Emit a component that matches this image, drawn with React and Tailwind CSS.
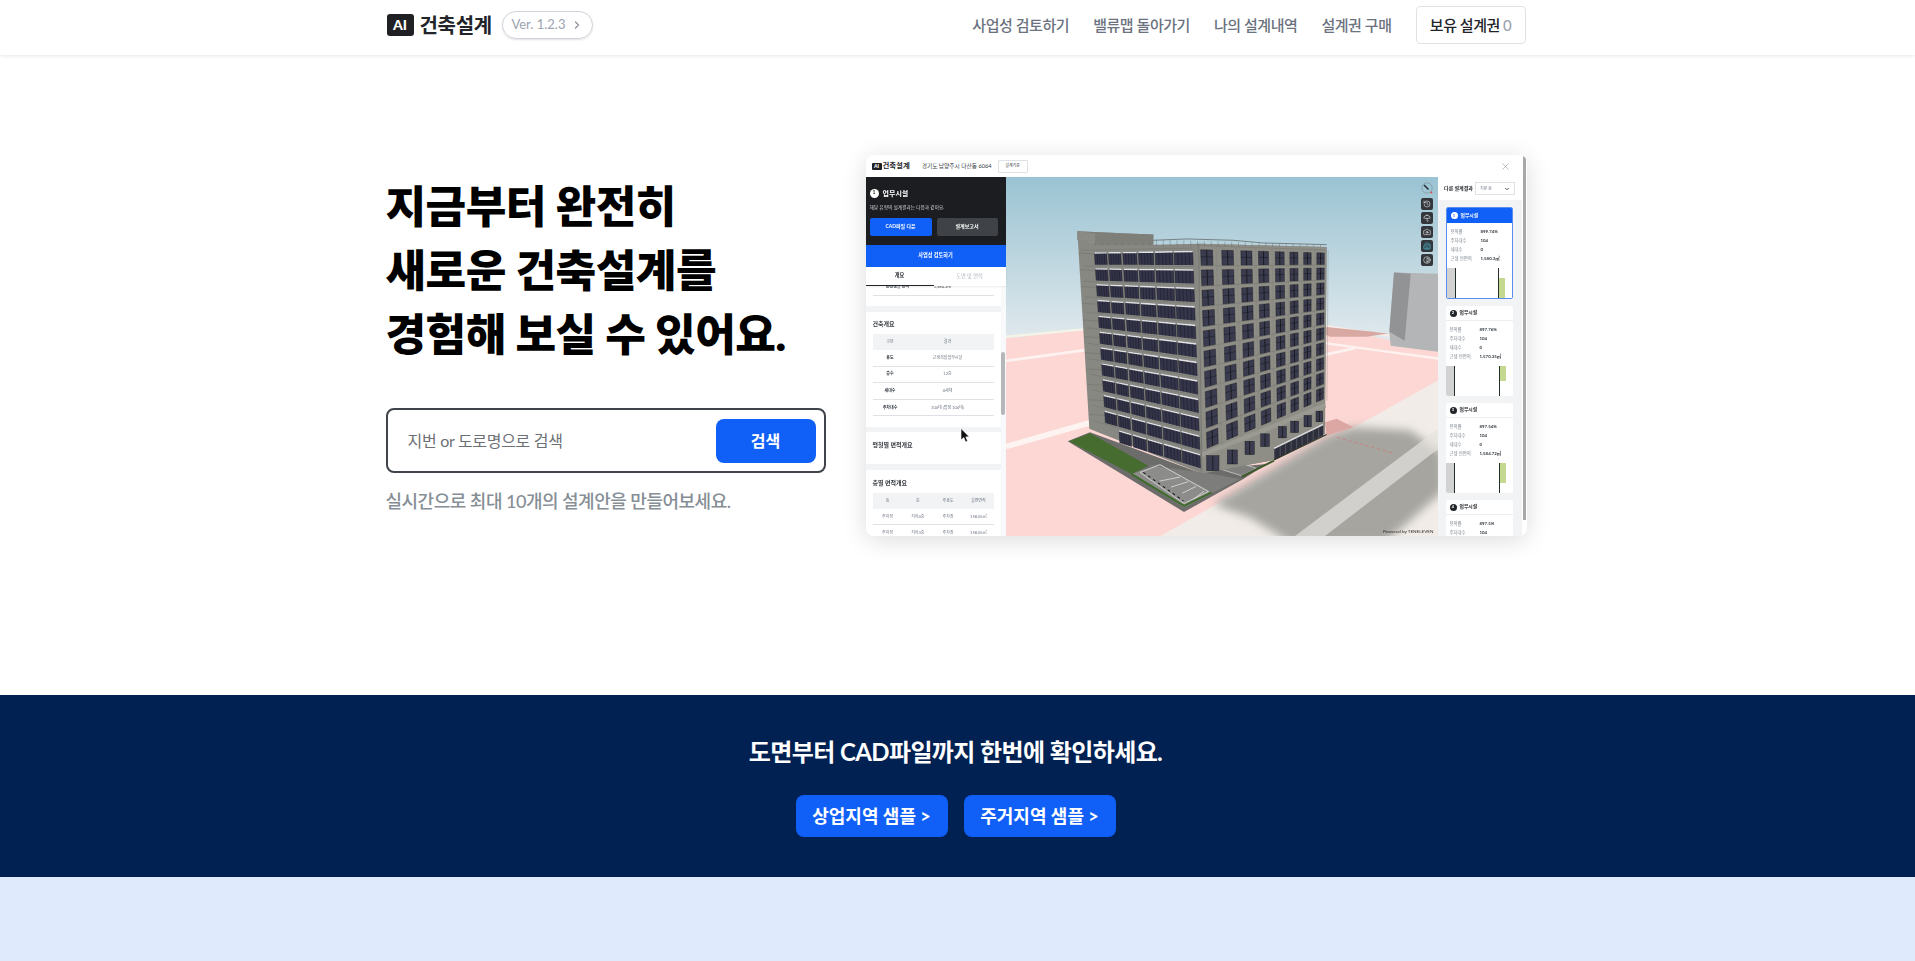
import React from "react";
import { ChevronRight, ChevronDown, X, History, Umbrella, Camera, Building2, Contrast } from "lucide-react";

const q = (c, u, v) => {
  const [tl, tr, bl, br] = c;
  const x = (1 - v) * ((1 - u) * tl[0] + u * tr[0]) + v * ((1 - u) * bl[0] + u * br[0]);
  const y = (1 - v) * ((1 - u) * tl[1] + u * tr[1]) + v * ((1 - u) * bl[1] + u * br[1]);
  return `${x.toFixed(1)},${y.toFixed(1)}`;
};
const quad = (c, u0, u1, v0, v1) => [q(c, u0, v0), q(c, u1, v0), q(c, u1, v1), q(c, u0, v1)].join(" ");
const seg = (c, u0, v0, u1, v1) => {
  const a = q(c, u0, v0).split(",");
  const b = q(c, u1, v1).split(",");
  return { x1: a[0], y1: a[1], x2: b[0], y2: b[1] };
};

const LF = [[283, 248], [578, 243], [320, 815], [602, 905]];
const RF = [[598, 240], [975, 250], [618, 848], [972, 695]];
const LC = [[0, 0.125], [0.142, 0.268], [0.288, 0.43], [0.447, 0.6], [0.617, 0.797], [0.81, 1]];
const RC = [[0.01, 0.105], [0.178, 0.27], [0.33, 0.418], [0.47, 0.55], [0.604, 0.675], [0.72, 0.785], [0.83, 0.89], [0.935, 0.995]];

function Facades() {
  const out = [];
  for (let r = 0; r < 12; r++) {
    const v0 = r / 12;
    const v1 = v0 + 0.78 / 12;
    out.push(<line key={`lf${r}`} {...seg(LF, -0.13, v0 - 0.012, 1, v0 - 0.012)} stroke="#74746f" strokeWidth="1.5" />);
    LC.forEach(([u0, u1], c) => {
      if (r === 11 && c === 0) return;
      out.push(<polygon key={`l${r}-${c}`} points={quad(LF, u0, u1, v0, v1)} fill="#34354a" />);
      out.push(<polygon key={`ls${r}-${c}`} points={quad(LF, u0, u1, v0, v0 + 0.09 / 12)} fill="#e2e2e2" />);
      for (let m = 0; m <= 5; m++) {
        const u = u0 + ((u1 - u0) * m) / 5;
        out.push(<line key={`lm${r}-${c}-${m}`} {...seg(LF, u, v0 + 0.09 / 12, u, v1)} stroke="#0f0f14" strokeWidth="1.1" />);
      }
    });
  }
  for (let r = 0; r < 10; r++) {
    const v0 = r / 10;
    const v1 = v0 + 0.78 / 10;
    out.push(<line key={`rf${r}`} {...seg(RF, 0, v0 - 0.02, 1, v0 - 0.02)} stroke="#74746f" strokeWidth="1.5" />);
    RC.forEach(([u0, u1], c) => {
      const mid = (u0 + u1) / 2;
      out.push(<polygon key={`r${r}-${c}`} points={quad(RF, u0, u1, v0, v1)} fill="#3a3b4e" stroke="#17171d" strokeWidth="1.2" />);
      out.push(<line key={`rv${r}-${c}`} {...seg(RF, mid, v0, mid, v1)} stroke="#101014" strokeWidth="2.2" />);
      out.push(<line key={`rh${r}-${c}`} {...seg(RF, u0, v0 + 0.035, u1, v0 + 0.035)} stroke="#101014" strokeWidth="1.3" />);
    });
  }
  RC.forEach(([, u1], c) => {
    out.push(<line key={`pil${c}`} {...seg(RF, u1 + 0.03, -0.02, u1 + 0.03, 1)} stroke="#7d7d77" strokeWidth="1" />);
  });
  return <g>{out}</g>;
}

function Scene() {
  const base = [[620, 855, 37, 45], [682, 838, 30, 42], [735, 812, 28, 40], [782, 790, 26, 38], [835, 768, 24, 34], [872, 752, 24, 34], [912, 735, 22, 34], [948, 722, 20, 32]];
  const strip = [];
  for (let i = 0; i < 9; i++) {
    const x = 824 + i * 16.5;
    strip.push(<line key={i} x1={x} y1={832 - i * 8} x2={x} y2={866 - i * 8} stroke="#9a9a9a" strokeWidth="1" />);
  }
  const park = [];
  for (let i = 1; i < 5; i++) {
    park.push(<line key={i} x1={445 + i * 34} y1={935 + i * 18 - 22} x2={516 + i * 24} y2={905 + i * 14} stroke="#eee" strokeWidth="2" />);
  }
  return (
    <svg viewBox="18 23 1296 1072" className="block h-full w-full" preserveAspectRatio="none">
      <defs>
        <linearGradient id="sky" x1="0" y1="0" x2="0" y2="1">
          <stop offset="0" stopColor="#9ac3d3" />
          <stop offset="0.22" stopColor="#bcd5df" />
          <stop offset="0.45" stopColor="#e0e9ed" />
        </linearGradient>
        <filter id="soft" x="-20%" y="-20%" width="140%" height="140%">
          <feGaussianBlur stdDeviation="14" />
        </filter>
      </defs>
      <rect x="18" y="23" width="1296" height="1072" fill="url(#sky)" />
      <polygon points="18,505 250,480 980,465 1314,545 1314,1095 18,1095" fill="#fcd7d4" />
      <polyline points="18,500 250,478" stroke="#f4f3e6" strokeWidth="7" fill="none" />
      <polyline points="975,467 1314,520" stroke="#f6ece8" strokeWidth="6" fill="none" />
      <polygon points="970,470 1165,490 1100,500 990,500 970,490" fill="#d8a9a3" />
      <line x1="18" y1="572" x2="255" y2="540" stroke="#fdf2ef" strokeWidth="8" />
      <line x1="18" y1="828" x2="275" y2="755" stroke="#fdf4f2" strokeWidth="17" />
      <line x1="965" y1="518" x2="1314" y2="565" stroke="#fdf2ef" strokeWidth="7" />
      <line x1="965" y1="556" x2="1065" y2="534" stroke="#fdf2ef" strokeWidth="9" />
      <polygon points="1182,308 1314,312 1314,545 1172,527 1168,485" fill="#b4b5b6" />
      <polygon points="1182,308 1232,312 1214,512 1168,485" fill="#929394" />
      <polygon points="480,1095 1314,630 1314,1095" fill="#f1ece7" />
      <g filter="url(#soft)">
        <polygon points="640,1000 985,795 1060,770 1230,780 1330,850 1330,960 1150,1120 880,1120 750,1040" fill="#a6a5a0" />
      </g>
      <polygon points="885,1095 1314,775 1314,835 975,1095" fill="#e6e3de" opacity="0.7" />
      <line x1="1010" y1="800" x2="1180" y2="848" stroke="#d9706f" strokeWidth="2" strokeDasharray="10 8" />
      <polygon points="980,795 1060,770 1010,745 975,755" fill="#dca7a2" />

      <polygon points="203,812 270,785 605,908 660,893 800,880 730,925 552,1023" fill="#6c6c6a" />
      <polygon points="207,812 270,788 445,885 395,910" fill="#466d2f" />
      <polygon points="395,910 480,880 640,965 552,1010" fill="#8c8c8a" />
      <polygon points="445,885 605,905 720,925 640,965 480,880" fill="#7d7d7b" />
      <polyline points="395,910 552,1005 635,965" stroke="#3f6b2a" strokeWidth="6" fill="none" />
      <polyline points="430,905 550,990" stroke="#111" strokeWidth="3" strokeDasharray="8 10" fill="none" />
      <polygon points="420,905 480,882 625,962 552,998" fill="none" stroke="#eee" strokeWidth="2" />
      {park}
      <polygon points="660,895 715,875 770,893 725,915" fill="#7f7f7d" stroke="#ddd" strokeWidth="2" />
      <line x1="725" y1="918" x2="822" y2="870" stroke="#3d5a2b" strokeWidth="6" />

      <polygon points="232,185 460,195 460,225 598,222 980,232 975,790 822,868 605,908 268,775" fill="#888883" />
      <polygon points="598,222 980,232 975,700 972,790 822,868 605,908" fill="#8e8e87" />
      <polygon points="232,185 460,195 460,225 285,225 232,210" fill="#7f7f7a" />
      <polygon points="232,185 285,192 285,225 232,210" fill="#8b8b85" />
      <polyline points="460,212 560,208 700,212 790,220 980,225" stroke="#55595a" strokeWidth="2" fill="none" />
      {Array.from({ length: 34 }, (_, i) => (
        <line key={i} x1={285 + i * 20.5} y1={i < 9 ? 222 : 210 + (i - 9) * 0.6} x2={285 + i * 20.5} y2={228 + i * 0.1} stroke="#55595a" strokeWidth="1" />
      ))}
      {[250, 300, 350, 400, 450, 500, 548, 596, 642, 688, 732].map((y, i) => (
        <line key={y} x1={237 + i * 3} y1={y} x2={285 + i * 3.2} y2={y + 3} stroke="#70706b" strokeWidth="1.5" />
      ))}
      <Facades />
      <line x1="596" y1="222" x2="606" y2="908" stroke="#6f6f6a" strokeWidth="2" />
      <polygon points="606,846 975,698 978,712 606,860" fill="#9a9a93" />
      {base.map(([x, y, w, h]) => (
        <g key={x}>
          <rect x={x} y={y} width={w} height={h} fill="#3a3b4e" stroke="#141418" strokeWidth="1.2" />
          <line x1={x + w / 2} y1={y} x2={x + w / 2} y2={y + h} stroke="#101014" strokeWidth="2" />
        </g>
      ))}
      <polygon points="822,830 970,758 970,795 822,868" fill="#2e2f3d" />
      <polygon points="822,830 970,758 970,764 822,836" fill="#d8d8d8" />
      {strip}
      <line x1="822" y1="868" x2="980" y2="792" stroke="#2a3320" strokeWidth="3" />
    </svg>
  );
}

function AiMark({ big }) {
  return (
    <span className={big ? "ml-[1px] flex h-[22px] w-[27px] items-center justify-center rounded-[3px] bg-[#1e2023] text-[14px] leading-none font-black text-white" : "flex h-[7px] w-[10px] items-center justify-center rounded-[1px] bg-[#1e2023] text-[5px] leading-none font-black text-white"}>AI</span>
  );
}

function MiniRow({ a, b }) {
  return (
    <div className="grid h-[16.6px] grid-cols-[35px_80px] items-center border-b border-[#dee2e6] text-center text-[4px] text-[#6b7280]">
      <span className="font-bold text-[#343a40]">{a}</span>
      <span>{b}</span>
    </div>
  );
}

function FloorRow({ c }) {
  return (
    <div className="grid h-[16.2px] grid-cols-4 items-center border-b border-[#dee2e6] text-center text-[4px] text-[#6b7280]">
      {c.map((t, i) => <span key={i}>{t}</span>)}
    </div>
  );
}

function LeftPanel() {
  return (
    <div className="flex w-[140px] flex-col bg-white">
      <div className="flex h-[68px] flex-col bg-[#1c1d20] px-1 pt-[11px]">
        <div className="flex h-[10px] items-center gap-[4px]">
          <span className="flex h-[9px] w-[9px] items-center justify-center rounded-full bg-white text-[5px] font-bold text-[#1c1d20]">1</span>
          <span className="text-[7px] leading-none font-bold text-white">업무시설</span>
        </div>
        <p className="mt-[5px] text-[4.7px] leading-[8px] text-[#d1d5db]">해당 유형의 설계결과는 다음과 같아요.</p>
        <div className="mt-[7px] flex gap-[5px]">
          <div className="flex h-[18px] w-[62px] items-center justify-center rounded-[2px] bg-[#1060f8] text-[5px] font-bold text-white">CAD파일 다운</div>
          <div className="flex h-[18px] w-[61px] items-center justify-center rounded-[2px] bg-[#3f4246] text-[5px] font-bold text-white">설계보고서</div>
        </div>
      </div>
      <div className="flex h-[22px] items-center justify-center bg-[#1060f8] text-[5.2px] font-bold text-white">사업성 검토하기</div>
      <div className="relative z-10 flex h-[19px] bg-white shadow-[0_1px_2px_rgba(0,0,0,0.08)]">
        <div className="flex w-[68px] items-center justify-center border-b border-[#212529] text-[5.2px] font-bold text-[#212529]">개요</div>
        <div className="flex flex-1 items-center justify-center text-[5.2px] text-[#adb5bd]">도면 및 면적</div>
      </div>
      <div className="relative flex min-h-0 flex-1 overflow-hidden">
        <div className="w-[135px] flex-none">
          <div className="h-[20px] px-[7px]">
            <div className="grid h-[10px] grid-cols-[50px_40px] border-b border-[#dee2e6] text-center text-[4px] leading-[2px] text-[#343a40]"><span className="font-bold">근린생활 면적</span><span>1,580.3㎡</span></div>
          </div>
          <div className="h-[6px] bg-[#f1f3f5]" />
          <div className="h-[115px] px-[7px] pt-[8px]">
            <div className="text-[6px] leading-[7px] font-bold text-[#343a40]">건축개요</div>
            <div className="mt-[7px] grid h-[16px] grid-cols-[35px_80px] items-center bg-[#f1f3f5] text-center text-[4px] text-[#6b7280]"><span>구분</span><span>결과</span></div>
            <MiniRow a="용도" b="근생복합업무시설" />
            <MiniRow a="층수" b="12층" />
            <MiniRow a="세대수" b="0세대" />
            <MiniRow a="주차대수" b="104대 (법정 104대)" />
          </div>
          <div className="h-[5px] bg-[#f1f3f5]" />
          <div className="h-[32px] px-[7px] pt-[9px] text-[6px] leading-[7px] font-bold text-[#343a40]">평형별 면적개요</div>
          <div className="h-[6px] bg-[#f1f3f5]" />
          <div className="px-[7px] pt-[9px]">
            <div className="text-[6px] leading-[7px] font-bold text-[#343a40]">층별 면적개요</div>
            <div className="mt-[7px] grid h-[16px] grid-cols-4 items-center bg-[#f1f3f5] text-center text-[4px] text-[#6b7280]"><span>동</span><span>층</span><span>주용도</span><span>실면면적</span></div>
            <FloorRow c={["주차장", "지하4층", "주차장", "158.05㎡"]} />
            <FloorRow c={["주차장", "지하3층", "주차장", "158.05㎡"]} />
          </div>
        </div>
        <div className="flex-1 bg-[#f8f9fa]">
          <div className="mx-auto mt-[66px] h-[63px] w-[3.5px] rounded-full bg-[#b5b7b9]" />
        </div>
        <svg viewBox="0 0 10 16" className="absolute top-[142px] left-[94px] h-[16px] w-[10px]">
          <path d="M1 0.5 L1 12 L3.8 9.6 L5.6 14 L7.6 13.1 L5.8 8.9 L9.2 8.7 Z" fill="#111" stroke="#fff" strokeWidth="0.6" />
        </svg>
      </div>
    </div>
  );
}

function ViewPort() {
  const tools = [
    [History, "#fff"],
    [Umbrella, "#fff"],
    [Camera, "#fff"],
    [Building2, "#4fc3d9"],
    [Contrast, "#fff"],
  ];
  return (
    <div className="relative w-[432px] flex-none">
      <Scene />
      <div className="absolute top-[5px] right-[5px] flex flex-col items-center gap-[2px]">
        <svg viewBox="0 0 12 12" className="mb-[2px] h-[12px] w-[12px]">
          <circle cx="6" cy="6" r="5.2" fill="none" stroke="#74828a" strokeWidth="0.5" />
          <line x1="3" y1="3" x2="7.5" y2="7.5" stroke="#22262a" strokeWidth="1.4" />
          <circle cx="10.4" cy="10.4" r="0.9" fill="#e33" />
        </svg>
        {tools.map(([I, c], i) => (
          <div key={i} className="flex h-[12px] w-[12px] items-center justify-center rounded-[2px] bg-[#33373c]">
            <I size={8} color={c} strokeWidth={1.6} />
          </div>
        ))}
      </div>
      <div className="absolute right-[4px] bottom-[2px] text-[4.6px] leading-[6px] text-[#2b2b2b]">Powered by TENELEVEN</div>
    </div>
  );
}

function Thumb({ top, h }) {
  return (
    <div className="relative h-[30px] overflow-hidden bg-white">
      <div className="absolute inset-y-0 left-0 w-[8px] bg-[#d2d2d2]" />
      <div className="absolute inset-y-0 left-[8px] w-[0.7px] bg-[#23302a]" />
      <div className="absolute inset-y-0 right-[13px] w-[0.7px] bg-[#23302a]" />
      <div className="absolute right-[7px] w-[6px] bg-[#c5d88f]" style={{ top, height: h }} />
    </div>
  );
}

function Card({ n, vals, active, top, h }) {
  const labels = ["용적률", "주차대수", "세대수", "근생 연면적"];
  return (
    <div className={active ? "flex-none overflow-hidden rounded-[2px] border border-[#5b8def] bg-white" : "flex-none overflow-hidden rounded-[2px] bg-white"}>
      <div className={active ? "flex h-[15px] items-center gap-[3px] bg-[#1060f8] px-[4px] text-white" : "flex h-[15px] items-center gap-[3px] border-b border-[#eceef0] px-[4px] text-[#212529]"}>
        <span className={active ? "flex h-[7px] w-[7px] items-center justify-center rounded-full bg-white text-[4px] font-bold text-[#1060f8]" : "flex h-[7px] w-[7px] items-center justify-center rounded-full bg-[#212529] text-[4px] font-bold text-white"}>{n}</span>
        <span className="text-[4.8px] font-bold">업무시설</span>
      </div>
      <div className="px-[4px] py-[4.5px]">
        {labels.map((l, i) => (
          <div key={l} className="grid h-[9px] grid-cols-[30px_1fr] items-center text-[4.4px]">
            <span className="text-[#868e96]">{l}</span>
            <span className="font-bold text-[#343a40]">{vals[i]}</span>
          </div>
        ))}
      </div>
      <Thumb top={top} h={h} />
    </div>
  );
}

function RightPanel() {
  return (
    <div className="flex min-w-0 flex-1">
      <div className="flex w-[84px] flex-col bg-[#f1f3f5]">
        <div className="flex h-[23px] flex-none items-center justify-center gap-[2px] bg-white">
          <span className="text-[5px] font-bold whitespace-nowrap text-[#212529]">다른 설계결과</span>
          <span className="flex h-[13px] w-[40px] items-center justify-between border border-[#dee2e6] px-[4px] text-[4px] text-[#6b7280]">
            기본 순<ChevronDown size={6} color="#222" strokeWidth={3} />
          </span>
        </div>
        <div className="flex min-h-0 flex-1 flex-col gap-[7px] overflow-hidden pt-[7px] pr-[9px] pl-[8px]">
          <Card n="1" active vals={["899.74%", "104", "0", "1,580.3㎡"]} top={10} h={20} />
          <Card n="2" vals={["897.76%", "104", "0", "1,570.35㎡"]} top={0} h={15} />
          <Card n="3" vals={["897.54%", "104", "0", "1,584.72㎡"]} top={0} h={20} />
          <Card n="4" vals={["897.5%", "104", "0", "1,580㎡"]} top={0} h={20} />
        </div>
      </div>
      <div className="flex-1 bg-white">
        <div className="mx-auto mt-[-22px] h-[365px] w-[3px] bg-[#a8a8a8]" />
      </div>
    </div>
  );
}

function MiniApp() {
  return (
    <div className="flex h-[381px] w-[661px] flex-none flex-col overflow-hidden rounded-lg bg-white shadow-[0_4px_24px_rgba(0,0,0,0.14)] blur-[0.3px]">
      <div className="flex h-[22px] flex-none items-center bg-white pr-[16px] pl-[6px]">
        <AiMark />
        <span className="ml-[1px] text-[7.4px] font-bold text-[#212529]">건축설계</span>
        <span className="ml-[12px] text-[5.7px] text-[#343a40]">경기도 남양주시 다산동 6064</span>
        <span className="ml-[6px] flex h-[13px] w-[30px] items-center justify-center rounded-[1px] border border-[#dee2e6] text-[4px] text-[#343a40]">설계기준</span>
        <X size={11} color="#9aa0a6" strokeWidth={1.5} className="ml-auto" />
      </div>
      <div className="flex min-h-0 flex-1">
        <LeftPanel />
        <ViewPort />
        <RightPanel />
      </div>
    </div>
  );
}

export default function App() {
  return (
    <div className="flex min-h-[961px] flex-col bg-white font-['Lato','Noto_Sans_CJK_KR',sans-serif] text-[#212529]">
      <header className="relative z-10 flex h-[55px] flex-none justify-center bg-white pr-[4px] pb-[5px] shadow-[0_1px_4px_rgba(0,0,0,0.1)]">
        <div className="flex w-[1140px] items-center">
          <AiMark big />
          <span className="ml-[6px] text-[20px] font-bold tracking-[-0.3px] text-[#212529]">건축설계</span>
          <span className="ml-[10px] flex h-[28px] w-[91px] items-center justify-center gap-[6px] rounded-full border border-[#ced4da] text-[13px] text-[#9ca3af] shadow-[0_1px_2px_rgba(0,0,0,0.12)]">
            Ver. 1.2.3 <ChevronRight size={12} color="#8b929a" strokeWidth={2.4} />
          </span>
          <nav className="ml-auto flex items-center gap-[24px] text-[15px] font-medium tracking-[-0.45px] text-[#6b7280]">
            <span>사업성 검토하기</span>
            <span>밸류맵 돌아가기</span>
            <span>나의 설계내역</span>
            <span>설계권 구매</span>
            <span className="flex h-[38px] w-[110px] items-center justify-center gap-[3px] rounded-[4px] border border-[#dee2e6] text-[#212529]">
              보유 설계권 <span className="text-[#9ca3af]">0</span>
            </span>
          </nav>
        </div>
      </header>
      <main className="flex h-[640px] flex-none justify-center bg-white pt-[100px] pr-[4px]">
        <div className="flex w-[1140px] items-start gap-[40px]">
          <div className="flex w-[440px] flex-none flex-col pt-[19px]">
            <h1 className="text-[44.2px] leading-[64px] font-extrabold tracking-[-0.55px] text-black">
              지금부터 완전히<br />새로운 건축설계를<br />경험해 보실 수 있어요.
            </h1>
            <div className="mt-[42px] flex h-[65px] items-center justify-between rounded-lg border-2 border-[#3f444a] pr-[8px] pl-[20px]">
              <span className="text-[16px] tracking-[-0.3px] text-[#6c7075]">지번 or 도로명으로 검색</span>
              <button className="h-[44px] w-[100px] rounded-lg bg-[#1060f8] text-[16px] font-bold text-white">검색</button>
            </div>
            <p className="mt-[16px] text-[18px] leading-[24px] font-medium tracking-[-0.5px] text-[#868e96]">실시간으로 최대 10개의 설계안을 만들어보세요.</p>
          </div>
          <MiniApp />
        </div>
      </main>
      <section className="flex h-[182px] flex-none flex-col items-center bg-[#012153] pt-[40px] pr-[4px]">
        <h2 className="text-[24px] leading-[34px] font-bold tracking-[-0.6px] text-white">도면부터 CAD파일까지 한번에 확인하세요.</h2>
        <div className="mt-[26px] flex gap-[16px]">
          <button className="h-[42px] w-[152px] rounded-lg bg-[#1060f8] text-[18px] font-bold text-white">상업지역 샘플 &gt;</button>
          <button className="h-[42px] w-[152px] rounded-lg bg-[#1060f8] text-[18px] font-bold text-white">주거지역 샘플 &gt;</button>
        </div>
      </section>
      <section className="min-h-[84px] flex-1 bg-[#e0eafd]" />
    </div>
  );
}
